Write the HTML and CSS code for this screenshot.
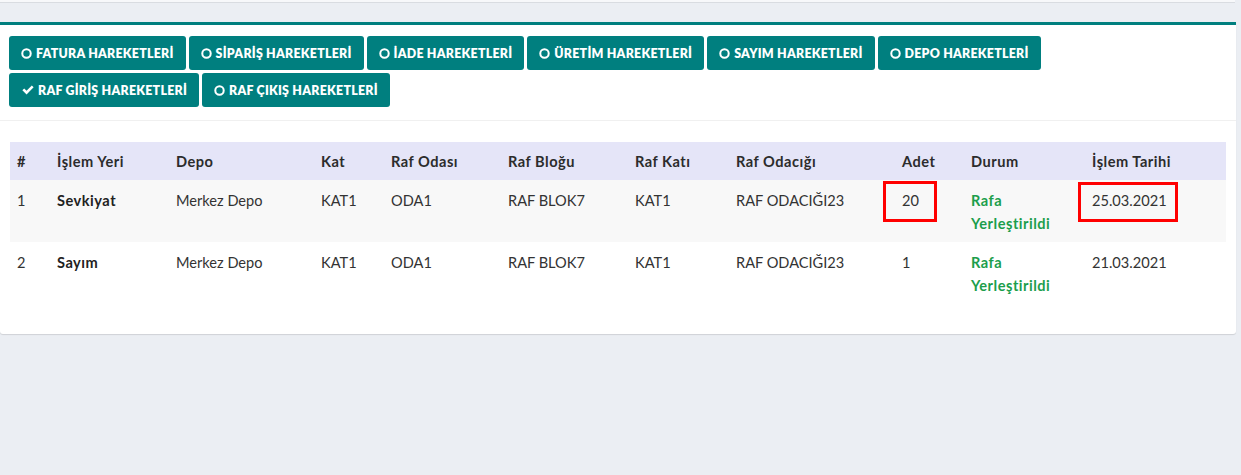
FILE: index.html
```html
<!DOCTYPE html>
<html lang="tr">
<head>
<meta charset="utf-8">
<title>Raf Giriş Hareketleri</title>
<link rel="stylesheet" href="styles.css">
</head>
<body>
<div class="topbar"></div>
<div class="card">
  <div class="card-header">
    <a class="btn"><svg class="ic" viewBox="0 0 12 12"><circle cx="6" cy="6" r="4.6" fill="none" stroke="currentColor" stroke-width="2.2"/></svg>FATURA HAREKETLERİ</a>
    <a class="btn"><svg class="ic" viewBox="0 0 12 12"><circle cx="6" cy="6" r="4.6" fill="none" stroke="currentColor" stroke-width="2.2"/></svg>SİPARİŞ HAREKETLERİ</a>
    <a class="btn"><svg class="ic" viewBox="0 0 12 12"><circle cx="6" cy="6" r="4.6" fill="none" stroke="currentColor" stroke-width="2.2"/></svg>İADE HAREKETLERİ</a>
    <a class="btn"><svg class="ic" viewBox="0 0 12 12"><circle cx="6" cy="6" r="4.6" fill="none" stroke="currentColor" stroke-width="2.2"/></svg>ÜRETİM HAREKETLERİ</a>
    <a class="btn"><svg class="ic" viewBox="0 0 12 12"><circle cx="6" cy="6" r="4.6" fill="none" stroke="currentColor" stroke-width="2.2"/></svg>SAYIM HAREKETLERİ</a>
    <a class="btn"><svg class="ic" viewBox="0 0 12 12"><circle cx="6" cy="6" r="4.6" fill="none" stroke="currentColor" stroke-width="2.2"/></svg>DEPO HAREKETLERİ</a>
    <a class="btn btn-active"><svg class="ic ic-check" viewBox="0 0 13 11"><path d="M0.3 5.8 L2.3 3.8 L4.9 6.4 L10.7 0.6 L12.7 2.6 L4.9 10.4 Z" fill="currentColor"/></svg>RAF GİRİŞ HAREKETLERİ</a>
    <a class="btn"><svg class="ic" viewBox="0 0 12 12"><circle cx="6" cy="6" r="4.6" fill="none" stroke="currentColor" stroke-width="2.2"/></svg>RAF ÇIKIŞ HAREKETLERİ</a>
  </div>
  <div class="card-body">
    <table class="tbl">
      <colgroup>
        <col class="c1"><col class="c2"><col class="c3"><col class="c4"><col class="c5"><col class="c6"><col class="c7"><col class="c8"><col class="c9"><col class="c10"><col class="c11">
      </colgroup>
      <thead>
        <tr><th>#</th><th>İşlem Yeri</th><th>Depo</th><th>Kat</th><th>Raf Odası</th><th>Raf Bloğu</th><th>Raf Katı</th><th>Raf Odacığı</th><th>Adet</th><th>Durum</th><th class="th-date">İşlem Tarihi</th></tr>
      </thead>
      <tbody>
        <tr class="odd"><td>1</td><td class="b">Sevkiyat</td><td>Merkez Depo</td><td>KAT1</td><td>ODA1</td><td>RAF BLOK7</td><td>KAT1</td><td>RAF ODACIĞI23</td><td class="mark-cell"><span class="mark mark-qty"></span>20</td><td class="ok">Rafa Yerleştirildi</td><td class="mark-cell date"><span class="mark mark-date"></span>25.03.2021</td></tr>
        <tr><td>2</td><td class="b">Sayım</td><td>Merkez Depo</td><td>KAT1</td><td>ODA1</td><td>RAF BLOK7</td><td>KAT1</td><td>RAF ODACIĞI23</td><td>1</td><td class="ok">Rafa Yerleştirildi</td><td class="date">21.03.2021</td></tr>
      </tbody>
    </table>
  </div>
</div>
</body>
</html>
```
FILE: styles.css
```css
html, body {
  margin: 0;
  padding: 0;
}
body {
  background: #ebeef3;
  font-family: Lato, "Open Sans", "Liberation Sans", sans-serif;
  color: #333;
  width: 1241px;
  height: 475px;
  overflow: hidden;
}
.topbar {
  width: 1235px;
  height: 2px;
  background: #f7f8fa;
  border-bottom: 1px solid #d9dce1;
  margin-bottom: 19px;
}
.card {
  width: 1236px;
  background: #fff;
  border-top: 3px solid #007f7f;
  border-radius: 0 0 3px 3px;
  box-shadow: 0 1px 1px rgba(0,0,0,0.12);
}
.card-header {
  display: flex;
  flex-wrap: wrap;
  gap: 3px;
  padding: 11px 10px 13px 9px;
  border-bottom: 1px solid #f0f0f0;
}
.btn {
  display: inline-flex;
  align-items: center;
  height: 34px;
  box-sizing: border-box;
  padding: 0 12px;
  background: #007f7f;
  color: #fff;
  border-radius: 3px;
  font-size: 12.4px;
  font-weight: 800;
  letter-spacing: 0.25px;
  white-space: nowrap;
}
.btn-active {
  padding-left: 13px;
  padding-right: 12px;
}
.ic {
  width: 11px;
  height: 11px;
  margin-right: 4px;
}
.ic-check {
  width: 12px;
  height: 10px;
  margin-right: 4px;
}
.card-body {
  padding: 21px 10px 30px 10px;
}
.tbl {
  width: 1216px;
  border-collapse: collapse;
  table-layout: fixed;
  font-size: 14.6px;
  line-height: 23px;
}
.c1 { width: 39px; }
.c2 { width: 119px; }
.c3 { width: 145px; }
.c4 { width: 70px; }
.c5 { width: 117px; }
.c6 { width: 127px; }
.c7 { width: 101px; }
.c8 { width: 166px; }
.c9 { width: 69px; }
.c10 { width: 121px; }
.c11 { width: 142px; }
.tbl th {
  background: #e5e5f8;
  text-align: left;
  font-weight: 700;
  letter-spacing: 0.5px;
  color: #2c2c2c;
  padding: 8px 7px 7px 8px;
  height: 23px;
}
.tbl td {
  vertical-align: top;
  padding: 9px 7px 7px 8px;
  color: #333;
}
.tbl tr.odd td {
  background: #f8f8f8;
}
.tbl td.b {
  font-weight: 700;
  letter-spacing: 0.5px;
  color: #222;
}
.tbl td.ok {
  color: #1c9e4c;
  font-weight: 700;
  letter-spacing: 0.5px;
}
.tbl th:first-child, .tbl td:first-child {
  padding-left: 7px;
}
.mark-cell {
  position: relative;
}
.mark {
  position: absolute;
  border: 3px solid #f00;
  box-sizing: border-box;
  pointer-events: none;
}
.mark-qty {
  left: -11px;
  top: 1px;
  width: 54px;
  height: 41px;
}
.mark-date {
  left: -6px;
  top: 2px;
  width: 100px;
  height: 40px;
}
```
